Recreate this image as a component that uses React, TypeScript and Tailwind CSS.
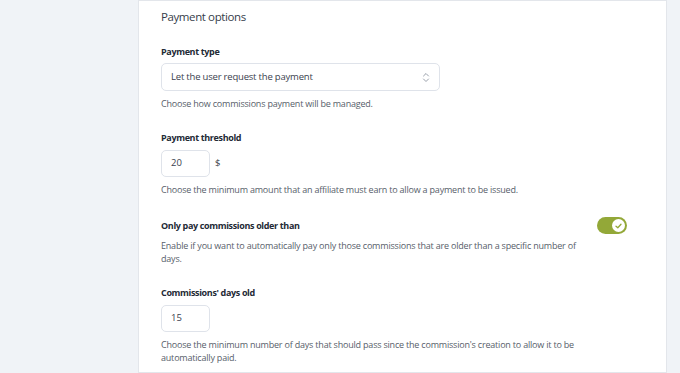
import React from 'react';

const font = { fontFamily: '"Open Sans", "Noto Sans", sans-serif' };

const Desc: React.FC<{ children: React.ReactNode; className?: string }> = ({ children, className = '' }) => (
  <p className={`text-[9px] leading-[13px] tracking-[-0.2px] text-[#575e6a] ${className}`}>{children}</p>
);

const Label: React.FC<{ children: React.ReactNode; className?: string }> = ({ children, className = '' }) => (
  <div className={`text-[9px] leading-[14px] tracking-[-0.35px] font-bold text-[#232a35] ${className}`}>
    {children}
  </div>
);

const App: React.FC = () => {
  return (
    <div className="flex w-[680px] h-[373px] bg-[#f0f3f7] overflow-hidden" style={font}>
      {/* left gutter */}
      <div className="w-[138px] shrink-0" />

      {/* Settings card */}
      <div className="flex-1 bg-white border border-[#e3e6eb] h-[373px] pt-[8px] pl-[22px] pr-[39px]">
        <h2 className="text-[11.5px] leading-[16px] tracking-[-0.4px] font-medium text-[#363d4a]">Payment options</h2>

        <Label className="mt-[20px]">Payment type</Label>
        <div className="mt-[4px] w-[279px] h-[28px] rounded-[5px] border border-[#dfe3ea] flex items-center justify-between pl-[9px] pr-[9px]">
          <span className="text-[9.5px] tracking-[-0.2px] text-[#3a414e]">Let the user request the payment</span>
          <svg width="8" height="11" viewBox="0 0 8 11" fill="none" stroke="#9aa1ab" strokeWidth="1" strokeLinecap="round" strokeLinejoin="round">
            <path d="M1.5 4 L4 1.5 L6.5 4" />
            <path d="M1.5 7 L4 9.5 L6.5 7" />
          </svg>
        </div>
        <Desc className="mt-[6px]">Choose how commissions payment will be managed.</Desc>

        <Label className="mt-[21px]">Payment threshold</Label>
        <div className="mt-[5px] flex items-center gap-[5px]">
          <div className="w-[49px] h-[27px] rounded-[5px] border border-[#dfe3ea] flex items-center pl-[9px] text-[9.5px] text-[#3a414e]">
            20
          </div>
          <span className="text-[9.5px] text-[#3a414e]">$</span>
        </div>
        <Desc className="mt-[6px]">
          Choose the minimum amount that an affiliate must earn to allow a payment to be issued.
        </Desc>

        <div className="mt-[23px] flex items-start justify-between">
          <div>
            <Label>Only pay commissions older than</Label>
            <Desc className="mt-[6px] w-[420px]">
              Enable if you want to automatically pay only those commissions that are older than a specific number of
              days.
            </Desc>
          </div>
          <div className="w-[30px] h-[17px] rounded-full bg-[#93a838] flex items-center justify-end pr-[2px] mt-[-2px]">
            <div className="w-[13px] h-[13px] rounded-full bg-white flex items-center justify-center">
              <svg width="7" height="6" viewBox="0 0 7 6" fill="none" stroke="#93a838" strokeWidth="1.3" strokeLinecap="round" strokeLinejoin="round">
                <path d="M1 3.2 L2.8 4.8 L6 1.2" />
              </svg>
            </div>
          </div>
        </div>

        <Label className="mt-[21px]">Commissions' days old</Label>
        <div className="mt-[5px] w-[49px] h-[27px] rounded-[5px] border border-[#dfe3ea] flex items-center pl-[9px] text-[9.5px] text-[#3a414e]">
          15
        </div>
        <Desc className="mt-[6px] w-[420px]">
          Choose the minimum number of days that should pass since the commission's creation to allow it to be
          automatically paid.
        </Desc>
      </div>

      {/* right gutter */}
      <div className="w-[13px] shrink-0" />
    </div>
  );
};

export default App;
